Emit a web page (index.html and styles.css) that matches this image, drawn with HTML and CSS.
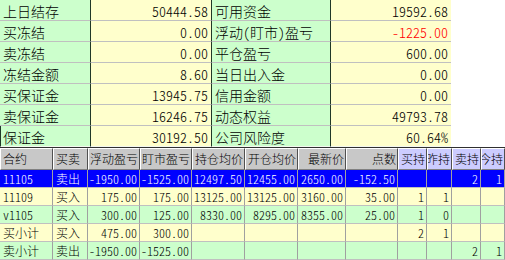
FILE: index.html
```html
<!DOCTYPE html>
<html>
<head>
<meta charset="utf-8">
<link rel="stylesheet" href="styles.css">
</head>
<body>
<div class="panel">
  <div class="prow"><div class="lab">上日结存</div><div class="val">50444.58</div><div class="lab">可用资金</div><div class="val">19592.68</div></div>
  <div class="prow"><div class="lab">买冻结</div><div class="val">0.00</div><div class="lab">浮动(盯市)盈亏</div><div class="val red">-1225.00</div></div>
  <div class="prow"><div class="lab">卖冻结</div><div class="val">0.00</div><div class="lab">平仓盈亏</div><div class="val">600.00</div></div>
  <div class="prow"><div class="lab">冻结金额</div><div class="val">8.60</div><div class="lab">当日出入金</div><div class="val">0.00</div></div>
  <div class="prow"><div class="lab">买保证金</div><div class="val">13945.75</div><div class="lab">信用金额</div><div class="val">0.00</div></div>
  <div class="prow"><div class="lab">卖保证金</div><div class="val">16246.75</div><div class="lab">动态权益</div><div class="val">49793.78</div></div>
  <div class="prow last"><div class="lab first">保证金</div><div class="val">30192.50</div><div class="lab">公司风险度</div><div class="val">60.64%</div></div>
</div>
<div class="tbl">
  <div class="trow head">
    <div class="c l">合约</div><div class="c l">买卖</div><div class="c">浮动盈亏</div><div class="c">盯市盈亏</div><div class="c">持仓均价</div><div class="c">开仓均价</div><div class="c">最新价</div><div class="c">点数</div><div class="c hold">买持</div><div class="c hold">昨持</div><div class="c hold">卖持</div><div class="c hold">今持</div>
  </div>
  <div class="trow sel">
    <div class="c l">11105</div><div class="c l">卖出</div><div class="c">-1950.00</div><div class="c">-1525.00</div><div class="c">12497.50</div><div class="c">12455.00</div><div class="c">2650.00</div><div class="c">-152.50</div><div class="c"></div><div class="c"></div><div class="c">2</div><div class="c">1</div>
  </div>
  <div class="trow y">
    <div class="c l">11109</div><div class="c l">买入</div><div class="c">175.00</div><div class="c">175.00</div><div class="c">13125.00</div><div class="c">13125.00</div><div class="c">3160.00</div><div class="c">35.00</div><div class="c">1</div><div class="c">1</div><div class="c"></div><div class="c"></div>
  </div>
  <div class="trow g">
    <div class="c l">v1105</div><div class="c l">买入</div><div class="c">300.00</div><div class="c">125.00</div><div class="c">8330.00</div><div class="c">8295.00</div><div class="c">8355.00</div><div class="c">25.00</div><div class="c">1</div><div class="c">0</div><div class="c"></div><div class="c"></div>
  </div>
  <div class="trow y">
    <div class="c l">买小计</div><div class="c l">买入</div><div class="c">475.00</div><div class="c">300.00</div><div class="c"></div><div class="c"></div><div class="c"></div><div class="c"></div><div class="c">2</div><div class="c">1</div><div class="c"></div><div class="c"></div>
  </div>
  <div class="trow g">
    <div class="c l">卖小计</div><div class="c l">卖出</div><div class="c">-1950.00</div><div class="c">-1525.00</div><div class="c"></div><div class="c"></div><div class="c"></div><div class="c"></div><div class="c"></div><div class="c"></div><div class="c">2</div><div class="c">1</div>
  </div>
</div>
</body>
</html>
```
FILE: styles.css
```css
html, body {
  margin: 0;
  padding: 0;
  background: #ffffff;
}
body {
  width: 505px;
  height: 260px;
  overflow: hidden;
  font-family: "Noto Sans CJK SC", sans-serif;
  font-feature-settings: "hwid";
  font-weight: 300;
  color: #000000;
}
.panel {
  width: 451px;
  display: flex;
  flex-direction: column;
}
.prow {
  display: grid;
  grid-template-columns: 91px 121px 119px 120px;
  height: 21px;
}
.lab, .val {
  box-sizing: border-box;
  display: flex;
  align-items: center;
  overflow: hidden;
  white-space: nowrap;
  font-size: 14px;
  line-height: 14px;
  border-bottom: 1px solid #c0c0c0;
}
.lab {
  background: #ccffcc;
  padding-left: 3px;
  padding-top: 1px;
}
.val {
  background: #ffffcc;
  justify-content: flex-end;
  padding-right: 3px;
  padding-top: 1px;
}
.prow > :nth-child(1),
.prow > :nth-child(2),
.prow > :nth-child(3) {
  border-right: 1px solid #203828;
}
.prow.last > div {
  border-bottom: 1px solid #f4f8f0;
}
.lab.first {
  border-left: 1px solid #203828;
  padding-left: 2px;
}
.red {
  color: #ff0000;
}
.tbl {
  width: 505px;
  border-top: 1px solid #303030;
}
.trow {
  display: grid;
  grid-template-columns: 53px 35px 52px 52px 53px 53px 48px 52px 29px 25px 29px 24px;
  height: 18px;
}
.c {
  box-sizing: border-box;
  display: flex;
  align-items: center;
  justify-content: flex-end;
  overflow: hidden;
  white-space: nowrap;
  font-size: 12px;
  line-height: 12px;
  padding-right: 2px;
  border-right: 1px solid #a0a0a0;
  border-bottom: 1px solid #c0c0c0;
}
.c.l {
  justify-content: flex-start;
  padding-left: 3px;
  padding-right: 0;
}
.head {
  height: 22px;
}
.head .c {
  background: #c8c8c8;
  border-top: 1px solid #ffffff;
  border-left: 1px solid #ffffff;
  border-right: 1px solid #505050;
  border-bottom: 1px solid #808080;
  padding-right: 1px;
}
.head .c.l {
  padding-left: 2px;
}
.head .c.hold {
  background: #ccccff;
}
.sel .c {
  background: #0000ff;
  color: #ffffff;
}
.y .c {
  background: #ffffcc;
}
.g .c {
  background: #ccffcc;
}
```
